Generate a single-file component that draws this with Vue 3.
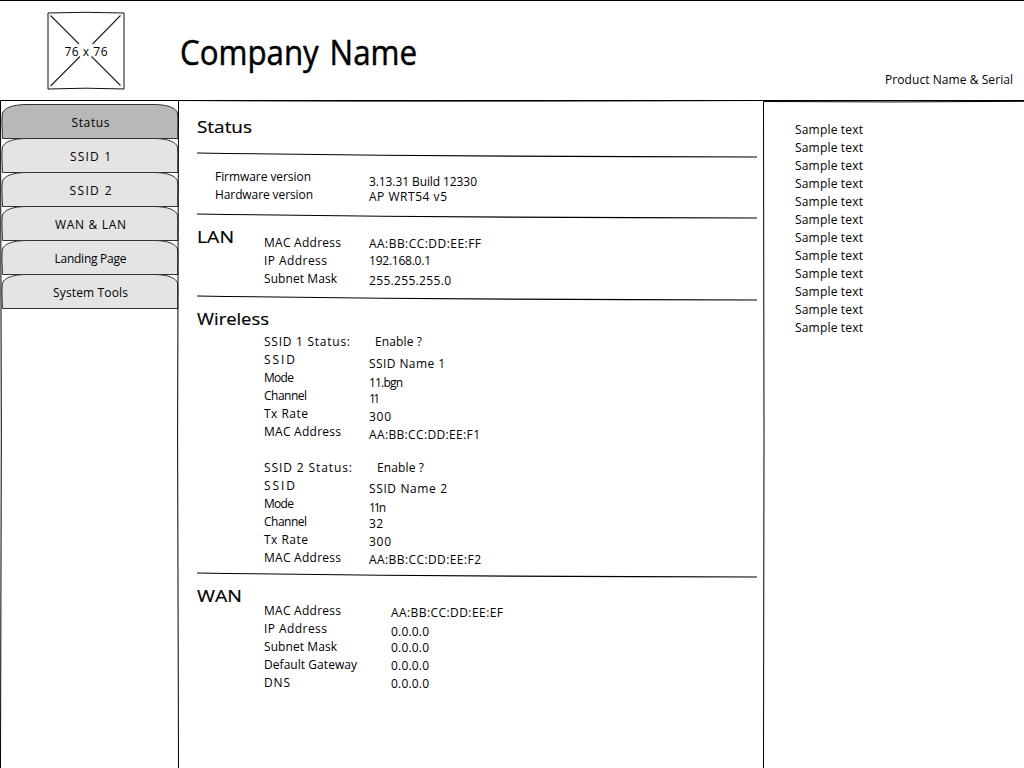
<script setup>
const tabs = [
  { text: 'Status', w: 38 },
  { text: 'SSID 1', w: 41 },
  { text: 'SSID 2', w: 42 },
  { text: 'WAN & LAN', w: 71 },
  { text: 'Landing Page', w: 72 },
  { text: 'System Tools', w: 75 }
]

// Each line: text, set width, distance to the next line
const sections = [
  { key: 'title', heading: 'Status', hw: 54, labels: [], values: [] },
  {
    key: 'version', heading: '', hw: 0,
    labels: [['Firmware version', 96, 18], ['Hardware version', 98, 18]],
    values: [['3.13.31 Build 12330', 108, 15], ['AP WRT54 v5', 78, 18]]
  },
  {
    key: 'lan', heading: 'LAN', hw: 36,
    labels: [['MAC Address', 77, 18], ['IP Address', 63, 18], ['Subnet Mask', 73, 18]],
    values: [['AA:BB:CC:DD:EE:FF', 112, 17], ['192.168.0.1', 62, 20], ['255.255.255.0', 82, 18]]
  },
  {
    key: 'wireless', heading: 'Wireless', hw: 71,
    labels: [
      ['SSID 1 Status:', 86, 18], ['SSID', 31, 18], ['Mode', 30, 18], ['Channel', 43, 18],
      ['Tx Rate', 44, 18], ['MAC Address', 77, 36],
      ['SSID 2 Status:', 88, 18], ['SSID', 31, 18], ['Mode', 30, 18], ['Channel', 43, 18],
      ['Tx Rate', 44, 18], ['MAC Address', 77, 18]
    ],
    values: [
      ['Enable ?', 47, 22, 'in1'], ['SSID Name 1', 76, 19], ['11.bgn', 34, 16], ['11', 11, 18],
      ['300', 22, 18], ['AA:BB:CC:DD:EE:F1', 111, 33],
      ['Enable ?', 47, 21, 'in2'], ['SSID Name 2', 78, 19], ['11n', 17, 16], ['32', 14, 18],
      ['300', 22, 18], ['AA:BB:CC:DD:EE:F2', 112, 18]
    ]
  },
  {
    key: 'wan', heading: 'WAN', hw: 44,
    labels: [
      ['MAC Address', 77, 18], ['IP Address', 63, 18], ['Subnet Mask', 73, 18],
      ['Default Gateway', 93, 18], ['DNS', 26, 18]
    ],
    values: [
      ['AA:BB:CC:DD:EE:EF', 112, 19], ['0.0.0.0', 38, 16], ['0.0.0.0', 38, 18],
      ['0.0.0.0', 38, 18], ['0.0.0.0', 38, 18]
    ]
  }
]

// Tracks the text so that it fills the given width
const vFit = {
  mounted(el, { value }) {
    const n = el.textContent.length - 1
    const natural = el.getBoundingClientRect().width
    el.style.letterSpacing = (value - natural) / n + 'px'
    el.style.marginRight = -(value - natural) / n + 'px'
  }
}

// Condenses or widens display text to the given width
const vStretch = {
  mounted(el, { value }) {
    el.style.transform = `scaleX(${value / el.getBoundingClientRect().width})`
  }
}
</script>

<template>
  <div class="page">
    <header class="header">
      <div class="logo">
        <svg width="80" height="80" viewBox="0 0 80 80">
          <path d="M2 3 Q40 1.6 78 3 V79 Q40 77.4 2 79 Z" fill="#fff" stroke="#111" />
          <path d="M4.5 5.5 L33 34 M74.5 5.5 L46.5 34 M4.5 76 L34 46.5 M45.5 46.5 L74.5 75.5" fill="none" stroke="#222" stroke-width="1.1" />
        </svg>
        <span class="logo-size"><span v-fit="43" class="t">76 x 76</span></span>
      </div>
      <h1 class="company"><span v-stretch="237" class="t stretch">Company Name</span></h1>
      <div class="product"><span v-fit="128" class="t">Product Name &amp; Serial</span></div>
    </header>

    <div class="body">
      <nav class="nav">
        <a v-for="(tab, i) in tabs" :key="tab.text" class="tab" :class="{ active: i === 0 }">
          <svg class="tab-shape" width="179" height="35" viewBox="0 0 179 35">
            <path d="M2.5 34.5 C2.7 28 1.2 20 2.3 10 C3.5 4 12 .8 26 .5 H155 C168 .8 176 4 177.5 9 C178.6 18 177 27 178 34.5 Z" />
          </svg>
          <span v-fit="tab.w" class="t tab-text">{{ tab.text }}</span>
        </a>
      </nav>

      <main class="main">
        <template v-for="(s, i) in sections" :key="s.key">
          <svg v-if="i" class="rule" width="560" height="6" viewBox="0 0 560 6">
            <path d="M0 1 Q280 4.8 560 5" />
          </svg>
          <section class="section" :class="s.key">
            <h2 v-if="s.heading" class="heading"><span v-stretch="s.hw + 1" class="t stretch">{{ s.heading }}</span></h2>
            <div class="labels">
              <div v-for="(l, j) in s.labels" :key="j" class="line" :style="{ height: l[2] + 'px' }">
                <span v-fit="l[1]" class="t">{{ l[0] }}</span>
              </div>
            </div>
            <div class="values">
              <div v-for="(l, j) in s.values" :key="j" class="line" :class="l[3]" :style="{ height: l[2] + 'px' }">
                <span v-fit="l[1]" class="t">{{ l[0] }}</span>
              </div>
            </div>
          </section>
        </template>
      </main>

      <aside class="aside">
        <div v-for="n in 12" :key="n" class="line sample"><span v-fit="68" class="t">Sample text</span></div>
      </aside>
    </div>

    <svg class="frame" width="1024" height="768" viewBox="0 0 1024 768">
      <path d="M0 .5 H1024 M0 100.5 H1024" />
      <path d="M.5 100 Q2.1 435 .5 768 M178.5 100 Q176.7 435 178.5 768" />
      <path d="M179 100.5 Q400 101.8 763 100.5" />
      <path d="M763.5 768 Q764.5 435 763.5 101.5 Q894 102.5 1024 101.3" />
    </svg>
  </div>
</template>

<style>
html, body { margin: 0; background: #fff; overflow: hidden; }
</style>

<style scoped>
.page {
  position: relative;
  width: 1024px;
  height: 768px;
  overflow: hidden;
  background: #fff;
  color: #000;
  font: 12px/17px "Comic Sans MS", "Open Sans", "Noto Sans", sans-serif;
}
.t { display: inline-block; white-space: pre; }
.stretch { transform-origin: 0 0; }
.header { display: flex; height: 101px; box-sizing: border-box; }
.logo { position: relative; width: 80px; height: 80px; margin: 10px 0 0 46px; }
.logo svg { display: block; }
.logo-size { position: absolute; left: 18.5px; top: 33px; }
.company {
  margin: 28px 0 0 54px;
  width: 300px;
  font-size: 35px;
  line-height: 47px;
  font-weight: 400;
  word-spacing: 3px;
  white-space: nowrap;
  -webkit-text-stroke: .5px #000;
}
.product { margin: 71px 11px 0 auto; }
.body { display: flex; height: 667px; }
.nav { width: 179px; padding-top: 3px; flex: none; }
.tab { position: relative; display: flex; justify-content: center; height: 34px; }
.tab-shape { position: absolute; left: 0; top: 0; fill: #e4e4e4; stroke: #333; }
.tab.active .tab-shape { fill: #b8b8b8; }
.tab-text { position: relative; margin-top: 10px; left: 1px; }
.main { width: 584px; padding-left: 18px; box-sizing: border-box; flex: none; }
.rule { display: block; }
.rule path { fill: none; stroke: #000; stroke-width: 1.1; }
.section { display: flex; box-sizing: border-box; }
.heading { margin: 0; width: 67px; flex: none; font-size: 17px; line-height: 23px; font-weight: 400; -webkit-text-stroke: .2px #000; }
.labels { width: 105px; flex: none; }
.line { white-space: nowrap; }
.in1 { padding-left: 6px; }
.in2 { padding-left: 8px; }
.title { height: 51px; padding-top: 14px; }
.version { height: 55px; padding: 10px 0 0 18px; }
.version .labels { width: 154px; }
.version .values { padding-top: 5px; }
.lan { height: 76px; padding-top: 6px; }
.lan .labels { padding-top: 9px; }
.lan .values { padding-top: 10px; }
.wireless { height: 271px; padding-top: 6px; }
.wireless .labels, .wireless .values { padding-top: 26px; }
.wan { padding-top: 6px; }
.wan .labels { width: 127px; padding-top: 18px; }
.wan .values { padding-top: 20px; }
.aside { padding: 20px 0 0 32px; }
.sample { height: 18px; }
.frame { position: absolute; left: 0; top: 0; pointer-events: none; }
.frame path { fill: none; stroke: #000; }
</style>
